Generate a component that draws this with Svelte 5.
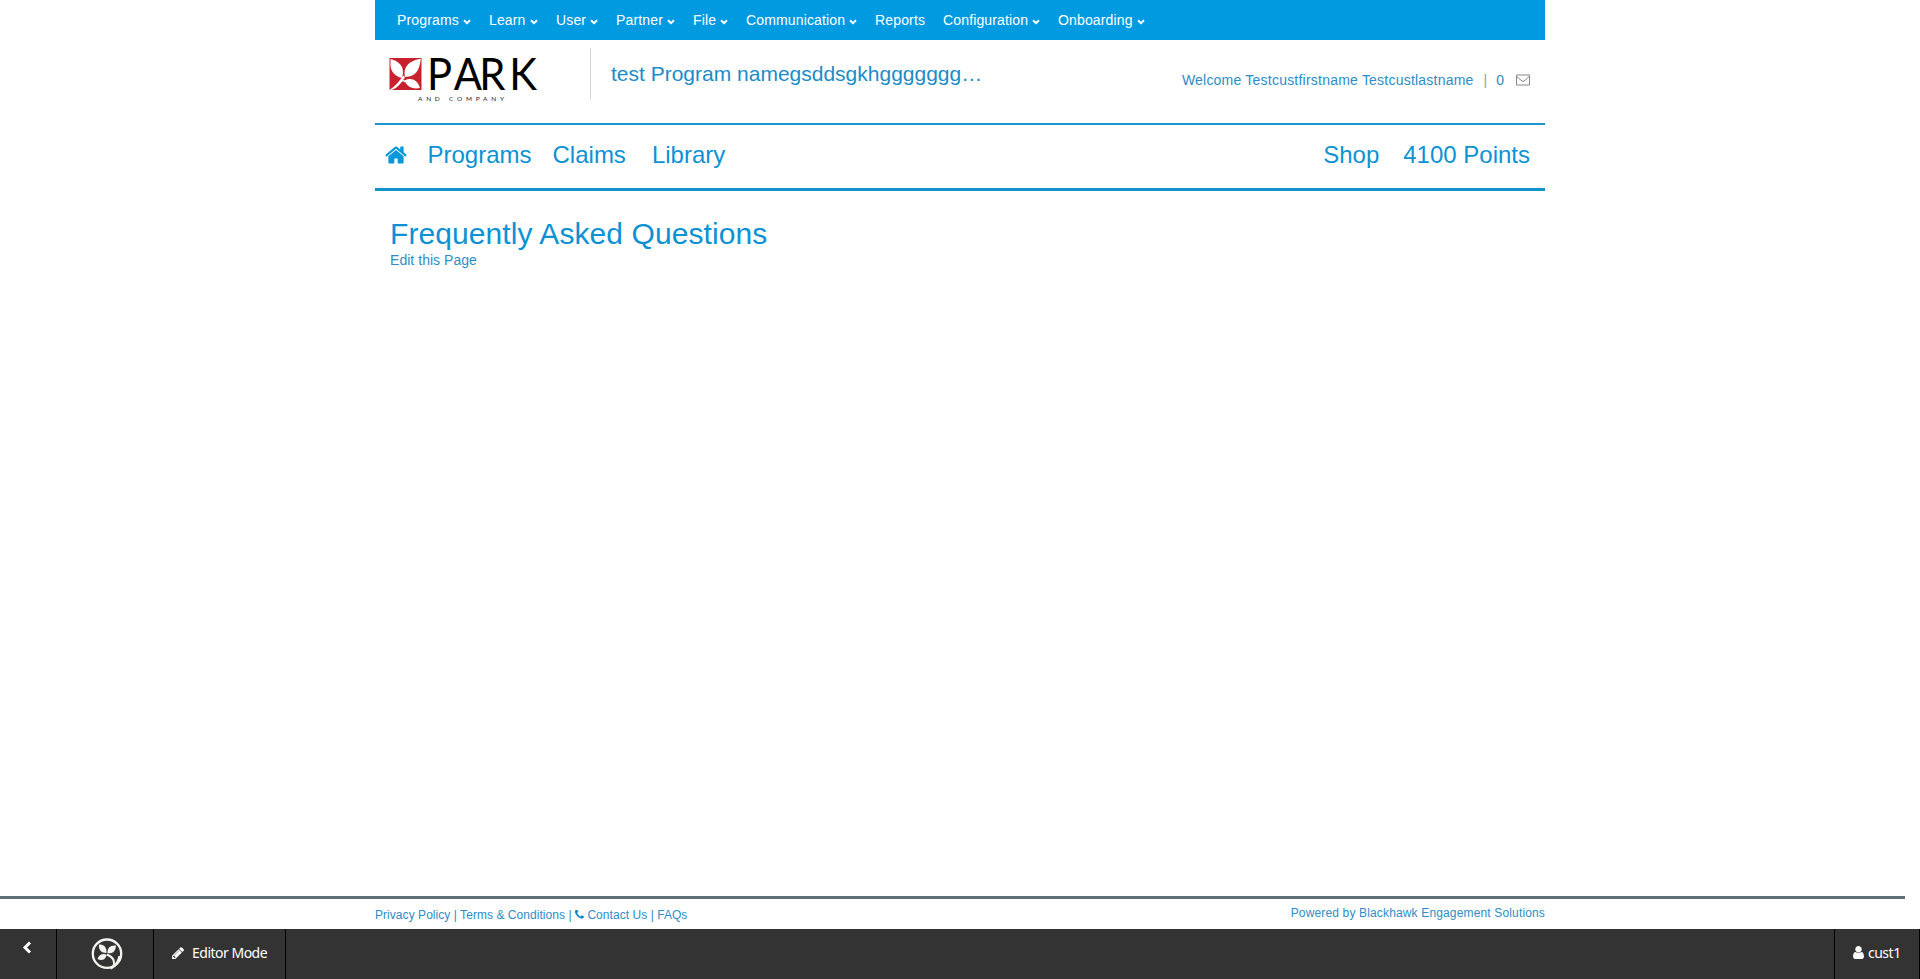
<script>
  const menu = [
    { label: 'Programs', width: 92, caret: true },
    { label: 'Learn', width: 67, caret: true },
    { label: 'User', width: 60, caret: true },
    { label: 'Partner', width: 77, caret: true },
    { label: 'File', width: 53, caret: true },
    { label: 'Communication', width: 129, caret: true },
    { label: 'Reports', width: 68, caret: false },
    { label: 'Configuration', width: 115, caret: true },
    { label: 'Onboarding', width: 92, caret: true }
  ];
</script>

<div class="page">
  <div class="container">
    <nav class="topbar">
      {#each menu as item}
        <a style:width="{item.width}px">
          <span>{item.label}</span>
          {#if item.caret}
            <svg class="caret" viewBox="0 0 8 6"><path d="M1 1.3 4 4.2 7 1.3" /></svg>
          {/if}
        </a>
      {/each}
    </nav>

    <header>
      <svg class="logo" viewBox="0 -16 150 66" width="150" height="66">
        <rect x="0.500" y="0" width="32" height="32" fill="#c8202d" />
        <g fill="#fff">
          <path d="M1.500 1C8 2.500 13 6.500 13.800 12c.4 3-.1 6-.8 8C6 18.500 2 13.500 1.500 8Z" />
          <path d="M31.800 .8C30.500 12 27.500 18.500 16 19 14 11 18 3 31.800 .8Z" />
          <path d="M15.500 22.500C22 19 28.500 22 31 30 24 31.500 18 29 15.500 22.500Z" />
          <path d="M.5 32C6 28.500 10.500 23 14.500 17.500l1.500 2C12 25 9 30 2.500 32Z" />
          <path d="M13 21.500l4 1.500-.5 1.500-4-1.500Z" />
        </g>
        <g transform="scale(.96 1)">
          <text class="brand" x="39.5 67.5 93.9 125.3" y="31.700">PARK</text>
        </g>
        <text class="tag" x="29" y="43" textLength="86">AND COMPANY</text>
      </svg>
      <div class="program">test Program namegsddsgkhggggggg…</div>
      <div class="welcome">
        <span class="name">Welcome Testcustfirstname Testcustlastname</span>
        <span class="bar">|</span>
        <span class="count">0</span>
        <svg class="mail" viewBox="0 0 14 12">
          <path d="M.5 1h13v10H.5ZM.7 2.500 6 7q1 .8 2 0L13.300 2.500" />
        </svg>
      </div>
    </header>

    <nav class="main">
      <svg class="home" viewBox="0 0 1664 1792"><path d="M1408 992v480q0 26-19 45t-45 19h-384v-384h-256v384h-384q-26 0-45-19t-19-45v-480q0-1 .5-3t.5-3l575-474 575 474q1 2 1 6zm223-69l-62 74q-8 9-21 11h-3q-13 0-21-7l-692-577-692 577q-12 8-24 7-13-2-21-11l-62-74q-8-10-7-23.500t11-21.500l719-599q32-26 76-26t76 26l244 204v-195q0-14 9-23t23-9h192q14 0 23 9t9 23v408l219 182q10 8 11 21.500t-7 23.500z" /></svg>
      <a class="programs">Programs</a>
      <a class="claims">Claims</a>
      <a class="library">Library</a>
      <a class="shop">Shop</a>
      <a class="points">4100 Points</a>
    </nav>

    <main>
      <h1>Frequently Asked Questions</h1>
      <a>Edit this Page</a>
    </main>
  </div>

  <footer>
    <div class="container foot">
      <div class="links">
        <a>Privacy Policy</a> | <a>Terms &amp; Conditions</a> |
        <svg class="phone" viewBox="192 256 1408 1280"><path d="M1600 1240q0 27-10 70.500t-21 68.500q-21 50-122 106-94 51-186 51-27 0-52.500-3.500t-57.500-12.500-47.500-14.500-55.500-20.500-49-18q-98-35-175-83-128-79-264.500-215.500t-215.500-264.500q-48-77-83-175-3-9-18-49t-20.500-55.500-14.500-47.500-12.500-57.500-3.500-52.500q0-92 51-186 56-101 106-122 25-11 68.500-21t70.500-10q14 0 21 3 18 6 53 76 11 19 30 54t35 63.500 31 53.500q3 4 17.500 25t21.500 35.500 7 28.500q0 20-28.500 50t-62 55-62 53-28.500 46q0 9 5 22.500t8.500 20.500 14 24 11.500 19q76 137 174 235t235 174q2 1 19 11.500t24 14 20.500 8.500 22.500 5q18 0 46-28.500t53-62 55-62 50-28.500q14 0 28.500 7t35.500 21.500 25 17.500q25 15 53.500 31t63.500 35 54 30q70 35 76 53 3 7 3 21z" /></svg>
        <a>Contact Us</a> | <a>FAQs</a>
      </div>
      <div class="powered">Powered by Blackhawk Engagement Solutions</div>
    </div>
  </footer>

  <div class="toolbar">
    <div class="cell back">
      <svg viewBox="0 0 10 13"><path d="M8 1.500 3 6.500 8 11.500" /></svg>
    </div>
    <div class="cell badge">
      <svg viewBox="0 0 32 32">
        <circle cx="16" cy="15.700" r="14.200" fill="none" stroke="#f4f4ee" stroke-width="2.300" />
        <path d="M16 16.500C21 18.500 24.500 22 22.500 28.500" fill="none" stroke="#f4f4ee" stroke-width="2" />
        <g fill="#f4f4ee">
          <path d="M8 6.500C13 6.500 15.800 9 15.500 15 10 15 7.500 12 8 6.500Z" />
          <path d="M25 7.500C24.500 13 22 16 16.500 15.200 16.200 10 19 7 25 7.500Z" />
          <path d="M6.500 21C8 16.500 12 15 15.800 16.700 14.500 21.500 11 23.500 6.500 21Z" />
          <path d="M29.500 18C28.500 24 25.500 29 20 31.500L18.500 29C23.500 27.500 26.500 23 27.300 18Z" />
        </g>
      </svg>
    </div>
    <div class="cell editor">
      <svg viewBox="128 128 1515 1536"><path d="M491 1536l91-91-235-235-91 91v107h128v128h107zm523-928q0-22-22-22-10 0-17 7l-542 542q-7 7-7 17 0 22 22 22 10 0 17-7l542-542q7-7 7-17zm-54-192l416 416-832 832h-416v-416zm683 96q0 53-37 90l-166 166-416-416 166-165q36-38 90-38 53 0 91 38l235 234q37 39 37 91z" /></svg>
      <span>Editor Mode</span>
    </div>
    <div class="cell user">
      <svg viewBox="256 128 1280 1536"><path d="M1536 1399q0 109-62.500 187t-150.500 78h-854q-88 0-150.500-78t-62.500-187q0-85 8.500-160.500t31.500-152 58.500-131 94-89 134.500-34.500q131 128 313 128t313-128q76 0 134.500 34.500t94 89 58.500 131 31.500 152 8.500 160.500zm-256-887q0 159-112.500 271.500t-271.500 112.500-271.500-112.500-112.500-271.500 112.500-271.500 271.500-112.500 271.500 112.500 112.500 271.500z" /></svg>
      <span>cust1</span>
    </div>
  </div>
</div>

<style>
  :global(body) {
    margin: 0;
    background: #fff;
  }
  .page {
    height: 979px;
    display: flex;
    flex-direction: column;
    overflow: hidden;
    font-family: "Liberation Sans", Arial, sans-serif;
    font-size: 14px;
    color: #2d8dc8;
    white-space: nowrap;
  }
  .page * {
    box-sizing: border-box;
  }
  svg {
    display: block;
    flex: none;
  }
  .container {
    width: 1170px;
    margin: 0 auto;
  }
  .topbar {
    height: 40px;
    display: flex;
    background: #009ae1;
    padding-left: 22px;
    color: #fff;
    line-height: 40px;
  }
  .topbar a {
    display: flex;
    align-items: center;
    gap: 4px;
    letter-spacing: 0.15px;
  }
  .caret {
    width: 8px;
    height: 6px;
    margin-top: 3px;
  }
  .caret path {
    fill: none;
    stroke: #fff;
    stroke-width: 2;
  }
  header {
    height: 85px;
    display: flex;
    align-items: flex-start;
    border-bottom: 2px solid #1c93cd;
    padding: 8px 15px 0 14px;
  }
  .logo {
    margin-top: -6px;
  }
  .brand {
    font: 400 43.500px Lato, sans-serif;
    fill: #000;
  }
  .tag {
    font: 400 6.500px Lato, sans-serif;
    fill: #222;
  }
  .program {
    height: 51px;
    margin-left: 51px;
    padding-left: 20px;
    border-left: 1px solid #d5d5d5;
    font-size: 21px;
    line-height: 51px;
    color: #1c8cc8;
  }
  .welcome {
    margin-left: auto;
    display: flex;
    align-items: center;
    height: 16px;
    margin-top: 24px;
    line-height: 16px;
  }
  .name {
    letter-spacing: 0.22px;
  }
  .bar {
    margin-left: 10px;
    color: #999;
  }
  .count {
    margin-left: 9px;
    margin-top: -1px;
  }
  .mail {
    width: 14px;
    height: 12px;
    margin: -1px 0 0 12px;
  }
  .mail path {
    fill: none;
    stroke: #888;
    stroke-width: 1;
  }
  .main {
    height: 66px;
    display: flex;
    align-items: center;
    padding: 0 15px 3px 10px;
    border-bottom: 3px solid #1193cf;
    font-size: 24px;
    color: #0c92d4;
  }
  .home {
    width: 22px;
    height: 24px;
    fill: #0798dc;
  }
  .programs { margin-left: 20.500px; }
  .claims { margin-left: 21px; }
  .library { margin-left: 26px; }
  .shop { margin-left: auto; }
  .points { margin-left: 24px; }
  main {
    padding: 25px 15px 0;
  }
  h1 {
    margin: 0;
    font-size: 30px;
    line-height: 36px;
    font-weight: 400;
    letter-spacing: 0.08px;
    color: #0c92d4;
  }
  main a {
    display: block;
    line-height: 16px;
    letter-spacing: 0.04px;
  }
  footer {
    height: 33px;
    width: 1905px;
    margin-top: auto;
    border-top: 3px solid #5f707a;
    font-size: 12px;
  }
  .foot {
    width: 1170px;
    margin-left: 375px;
    display: flex;
    justify-content: space-between;
    line-height: 14px;
  }
  .links {
    padding-top: 9px;
    letter-spacing: 0.05px;
  }
  .powered {
    padding-top: 7px;
    letter-spacing: 0.15px;
  }
  .phone {
    display: inline-block;
    width: 9px;
    height: 9px;
    fill: #1285c8;
  }
  .toolbar {
    height: 50px;
    display: flex;
    background: #333;
    color: #fff;
    font: 14px "Noto Sans", sans-serif;
    letter-spacing: -0.5px;
  }
  .cell {
    display: flex;
    align-items: center;
    border-right: 1px solid #000;
  }
  .back {
    width: 57px;
    padding: 0 0 13px 22px;
  }
  .back svg {
    width: 10px;
    height: 13px;
  }
  .back path {
    fill: none;
    stroke: #fff;
    stroke-width: 3;
  }
  .badge {
    width: 97px;
    padding: 0 0 1px 34px;
  }
  .badge svg {
    width: 32px;
    height: 32px;
  }
  .editor {
    width: 132px;
    padding: 0 0 3px 18px;
    gap: 8px;
  }
  .editor svg {
    width: 12px;
    height: 12px;
    fill: #fff;
  }
  .user {
    width: 86px;
    margin-left: auto;
    padding: 0 0 3px 18px;
    gap: 4px;
    border-left: 1px solid #000;
  }
  .user svg {
    width: 11px;
    height: 13px;
    fill: #fff;
  }
</style>
